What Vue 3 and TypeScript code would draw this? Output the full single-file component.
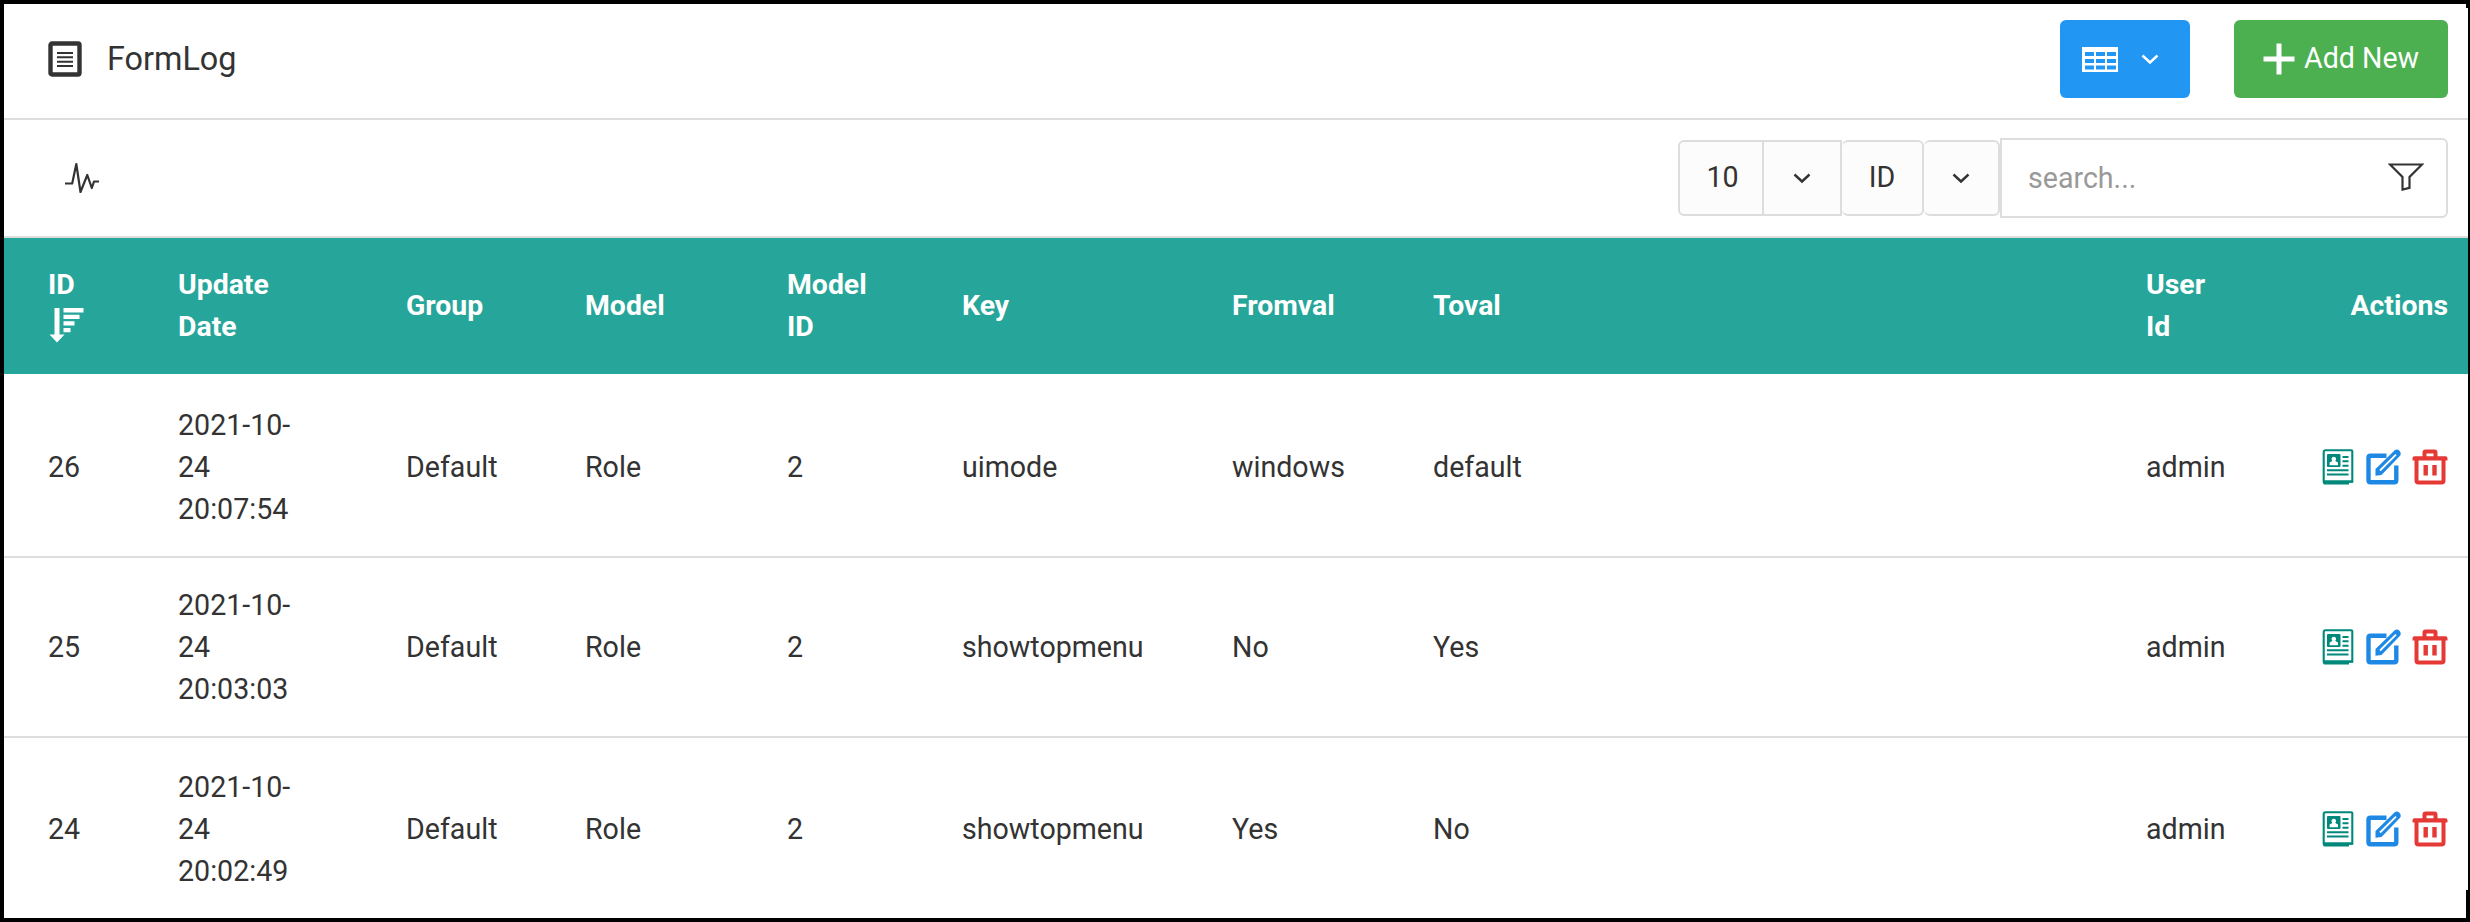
<script setup lang="ts">
interface Row {
  id: number
  date: string[]
  group: string
  model: string
  modelId: number
  key: string
  from: string
  to: string
  user: string
}

const rows: Row[] = [
  { id: 26, date: ['2021-10-', '24', '20:07:54'], group: 'Default', model: 'Role', modelId: 2, key: 'uimode', from: 'windows', to: 'default', user: 'admin' },
  { id: 25, date: ['2021-10-', '24', '20:03:03'], group: 'Default', model: 'Role', modelId: 2, key: 'showtopmenu', from: 'No', to: 'Yes', user: 'admin' },
  { id: 24, date: ['2021-10-', '24', '20:02:49'], group: 'Default', model: 'Role', modelId: 2, key: 'showtopmenu', from: 'Yes', to: 'No', user: 'admin' },
]
</script>

<template>
  <div class="frame">
    <header class="bar title-bar">
      <svg class="title-icon" viewBox="0 0 34 36">
        <rect x="2.5" y="2.5" width="29" height="31" rx="1.5" fill="none" stroke="#333" stroke-width="4.4" />
        <path d="M9 12h16M9 16.3h16M9 20.7h16M9 25h16" stroke="#333" stroke-width="2" />
      </svg>
      <h1>FormLog</h1>
      <button class="btn blue">
        <svg class="grid-icon" viewBox="0 0 36 25">
          <path fill="#fff" fill-rule="evenodd" d="M0 0h36v25H0zM3 5v4h9V5zM14 5v4h9V5zM25 5v4h9V5zM3 12v4h9v-4zM14 12v4h9v-4zM25 12v4h9v-4zM3 18.500v4h9v-4zM14 18.500v4h9v-4zM25 18.500v4h9v-4z" />
        </svg>
        <svg class="chev" viewBox="0 0 18 11"><path d="M1.500 1.500 9 8.500l7.500-7" /></svg>
      </button>
      <button class="btn green">
        <svg class="plus" viewBox="0 0 32 32"><path d="M13.500 0.500h5v13h13v5h-13v13h-5v-13h-13v-5h13z" fill="#fff" /></svg>
        <span>Add New</span>
      </button>
    </header>

    <div class="bar tool-bar">
      <svg class="pulse" viewBox="0 0 36 32"><path d="M1 21.500h7.200L12.300 2 16.500 30 23.300 13 27.800 26 30 19.500h5" /></svg>
      <div class="controls">
        <button class="cell c1">10</button>
        <button class="cell c2"><svg class="chev" viewBox="0 0 18 11"><path d="M1.500 1.500 9 8.500l7.500-7" /></svg></button>
        <button class="cell c3">ID</button>
        <button class="cell c4"><svg class="chev" viewBox="0 0 18 11"><path d="M1.500 1.500 9 8.500l7.500-7" /></svg></button>
        <div class="search">
          <span>search...</span>
          <svg class="funnel" viewBox="0 0 36 28"><path d="M2 1.500h32L21.500 14v10.800l-7 1.700V14z" /></svg>
        </div>
      </div>
    </div>

    <div class="row head">
      <div>ID<br /><svg class="sort" viewBox="0 0 35 35"><path fill="#fff" d="M5.500 0h5v26.500H15.500L8 34.500.5 26.500h5zM14.500 0h20v4.500h-20zM14.500 6.700H30.500v4.300h-16zM14.500 13.300H25.500v4.300h-11zM14.500 20H21.500v4.300h-7z" /></svg></div>
      <div>Update<br />Date</div>
      <div>Group</div>
      <div>Model</div>
      <div>Model<br />ID</div>
      <div>Key</div>
      <div>Fromval</div>
      <div>Toval</div>
      <div>User<br />Id</div>
      <div class="last">Actions</div>
    </div>
    <div v-for="r in rows" :key="r.id" class="row entry">
      <div>{{ r.id }}</div>
      <div><span v-for="d in r.date" :key="d" class="line">{{ d }}</span></div>
      <div>{{ r.group }}</div>
      <div>{{ r.model }}</div>
      <div>{{ r.modelId }}</div>
      <div>{{ r.key }}</div>
      <div>{{ r.from }}</div>
      <div>{{ r.to }}</div>
      <div>{{ r.user }}</div>
      <div class="last acts">
        <svg class="a1" viewBox="0 0 32 36">
          <path d="M3.500 1.200h25.800q1 0 1 1v30.300H1.700V3.200q0-2 1.800-2z" fill="#fff" stroke="#00897b" stroke-width="2.100" />
          <path d="M1 31.500h30v2.200h-4v1.800H2q-1-.3-1-2z" fill="#00897b" />
          <rect x="5" y="5" width="13.500" height="13" rx="1" fill="#00897b" />
          <path d="M9.500 10.300q0-2.600 2.300-2.600t2.300 2.600l-.8 1.700 2.700 1.500v2.700H7.600v-2.700l2.700-1.500z" fill="#fff" />
          <path d="M20.500 8h6M20.500 12.300h6M20.500 16.700h6M5 21.200h21.500M5 25.600h21.500" stroke="#00897b" stroke-width="2" />
        </svg>
        <svg class="a2" viewBox="0 0 36 36">
          <path d="M20.500 6.700H4.500q-2 0-2 2v22.600q0 2 2 2h23.800q2 0 2-2V16.500" fill="none" stroke="#1e88e5" stroke-width="4.400" />
          <path d="M9.500 20 28.500 1.500q2.500-2 5 .3 2.300 2.700.3 5.200L15.500 26l-6 .7z" fill="#1e88e5" />
          <path d="M14 21.500 30 5.600" stroke="#fff" stroke-width="1.800" />
        </svg>
        <svg class="a3" viewBox="0 0 36 36">
          <path d="M12.500 8V3.500q0-1 1-1h9q1 0 1 1V8M4.500 10v21.500q0 2 2 2h23q2 0 2-2V10" fill="none" stroke="#e53935" stroke-width="4" />
          <path d="M.5 9.300q0-2 2-2h31q2 0 2 2v2.200H.5zM11.500 16h4.400v10.500h-4.400zM20.300 16h4.400v10.500h-4.400z" fill="#e53935" />
        </svg>
      </div>
    </div>
  </div>
</template>

<style>
body {
  margin: 0;
  background: #000;
}
</style>

<style scoped>
* {
  box-sizing: border-box;
}
.frame {
  width: 2470px;
  height: 922px;
  overflow: hidden;
  border: solid #000;
  border-width: 4px 2px 4px 4px;
  background: #fff;
  font: 28.6px/42px Roboto, sans-serif;
  color: #333;
  position: relative;
}
/* thicker ends of the right-hand frame edge */
.frame::before,
.frame::after {
  content: '';
  position: absolute;
  right: 0;
  width: 2px;
  background: #000;
}
.frame::before {
  top: 0;
  height: 4px;
}
.frame::after {
  bottom: 0;
  height: 28px;
}
svg {
  display: block;
  flex: none;
}
.bar {
  display: flex;
  align-items: center;
  border-bottom: 2px solid #ddd;
}
.title-bar {
  height: 116px;
  padding: 0 20px 4px 44px;
}
.title-icon {
  width: 34px;
  height: 36px;
}
h1 {
  margin: 0 auto 0 25px;
  padding-bottom: 1px;
  font-size: 32.400px;
  font-weight: 400;
}
button {
  margin: 0;
  padding: 0;
  font: inherit;
  color: inherit;
}
.btn {
  display: flex;
  align-items: center;
  height: 78px;
  border: 0;
  border-radius: 6px;
  color: #fff;
}
.blue {
  width: 130px;
  margin-right: 44px;
  padding: 0 22px;
  background: #2196f3;
}
.grid-icon {
  width: 36px;
  height: 25px;
  margin-right: 23px;
}
.chev {
  width: 18px;
  height: 11px;
  fill: none;
  stroke: currentColor;
  stroke-width: 2.4;
}
.green {
  width: 214px;
  padding-left: 29px;
  gap: 9px;
  background: #4caf50;
}
.green span {
  padding-bottom: 2px;
}
.plus {
  width: 32px;
  height: 32px;
}
.tool-bar {
  height: 118px;
  padding: 0 20px 0 60px;
  justify-content: space-between;
}
.pulse {
  width: 36px;
  height: 32px;
  fill: none;
  stroke: #333;
  stroke-width: 2.2;
  stroke-linejoin: round;
}
.controls {
  display: flex;
  align-items: center;
}
.cell {
  display: flex;
  align-items: center;
  justify-content: center;
  height: 76px;
  border: 2px solid #ddd;
  background: #fcfcfc;
}
.c1 {
  width: 86px;
  padding: 0 0 3px 3px;
  border-radius: 6px 0 0 6px;
}
.c2 {
  width: 78px;
  border-left: 0;
}
.c3 {
  width: 82px;
  padding-bottom: 3px;
  border-left: 0;
  border-radius: 6px;
}
.c4 {
  width: 76px;
  border-left: 0;
  border-radius: 6px;
}
.search {
  display: flex;
  align-items: center;
  justify-content: space-between;
  width: 448px;
  height: 80px;
  padding: 0 22px 0 26px;
  border: 2px solid #ddd;
  border-radius: 0 6px 6px 0;
  color: #999;
}
.funnel {
  width: 36px;
  height: 28px;
  margin-bottom: 3px;
  fill: none;
  stroke: #333;
  stroke-width: 2.2;
}
.row {
  display: grid;
  grid-template-columns: 130px 228px 179px 202px 175px 270px 201px 713px 1fr auto;
  align-items: center;
  height: 180px;
  padding: 0 20px 0 44px;
  border-bottom: 2px solid #ddd;
}
.head {
  height: 136px;
  border: 0;
  background: #26a69a;
  color: #fff;
  font-size: 28.400px;
  font-weight: 700;
}
.head + .entry {
  height: 184px;
  padding-top: 4px;
}
.entry:last-child {
  height: 184px;
}
.line {
  display: block;
}
.last {
  text-align: right;
}
.sort {
  width: 35px;
  height: 35px;
  margin: 2px 0 5px 1px;
}
.acts {
  display: flex;
  align-items: center;
}
.a1 {
  width: 32px;
  height: 36px;
  margin-right: 12px;
}
.a2 {
  width: 36px;
  height: 36px;
  margin-right: 10px;
}
.a3 {
  width: 36px;
  height: 36px;
}
</style>
